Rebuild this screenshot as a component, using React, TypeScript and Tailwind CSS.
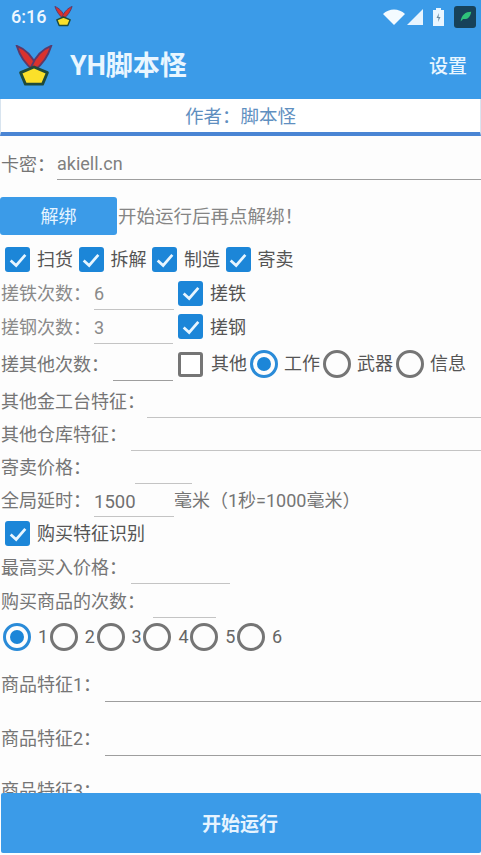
import React, { type FC } from "react";

// full-width punctuation, as the CJK font draws it
const COLON = "\uFF1A";
const BANG = "\uFF01";
const LP = "\uFF08";
const RP = "\uFF09";

const Logo: FC<{ className?: string }> = ({ className }) => (
  <svg viewBox="0 0 40 44" className={className}>
    <path d="M20 27 C12 21 5 11 2 1 C10 4 18 11 23 23 Z" fill="#d9322e" stroke="#5a3a6a" strokeWidth="2" />
    <path d="M20 27 C28 21 35 11 38 1 C30 4 22 11 17 23 Z" fill="#d9322e" stroke="#5a3a6a" strokeWidth="2" />
    <path d="M20 23 L34 29 L29 41 L11 41 L6 29 Z" fill="#fbe02a" stroke="#1f4a3a" strokeWidth="3" strokeLinejoin="round" />
  </svg>
);

const Check: FC<{ on?: boolean }> = ({ on = true }) =>
  on ? (
    <div className="flex h-[25px] w-[25px] shrink-0 items-center justify-center rounded-[3px] bg-[#1c86d8]">
      <svg viewBox="0 0 24 24" className="h-[22px] w-[22px]" fill="none" stroke="#e8f6ff" strokeWidth="3">
        <path d="M4 12.5 L10 18 L20 6.5" />
      </svg>
    </div>
  ) : (
    <div className="h-[25px] w-[25px] shrink-0 rounded-[3px] border-[3px] border-[#757575] bg-white" />
  );

const Radio: FC<{ on?: boolean; className?: string }> = ({ on, className = "" }) =>
  on ? (
    <div className={`flex h-[28px] w-[28px] shrink-0 items-center justify-center rounded-full border-[3px] border-[#2a8bd8] ${className}`}>
      <div className="h-[14px] w-[14px] rounded-full bg-[#1c86d8]" />
    </div>
  ) : (
    <div className={`h-[28px] w-[28px] shrink-0 rounded-full border-[3px] border-[#757575] ${className}`} />
  );

const Field: FC<{ label: string; h: number; inputClass: string }> = ({ label, h, inputClass }) => (
  <div className="flex items-center" style={{ height: h }}>
    <span className="shrink-0 whitespace-nowrap pl-px pt-[2px] text-[#757575]">{label + COLON}</span>
    <span className={`relative top-[2px] h-[30px] border-b border-[#c4c4c4] ${inputClass}`} />
  </div>
);

const cards = ["扫货", "拆解", "制造", "寄卖"];
const others = ["工作", "武器", "信息"];
const nums = ["1", "2", "3", "4", "5", "6"];

export default function App() {
  return (
    <div
      className="flex h-[855px] w-[481px] flex-col overflow-hidden bg-[#fdfdfd] text-[18px] leading-none"
      style={{ fontFamily: '"Roboto", "Noto Sans CJK SC", sans-serif' }}
    >
      <div className="h-[99px] shrink-0 bg-[#3b9be8] text-white">
        <div className="flex h-[33px] items-center pl-[11px] pr-[5px]">
          <span className="text-[18px] font-medium text-[#eef7ff]">6:16</span>
          <Logo className="ml-[7px] h-[21px] w-[21px]" />
          <div className="ml-auto flex items-center">
            <svg viewBox="0 0 22 16" className="h-[16px] w-[22px]">
              <path d="M0 5 C6 -1 16 -1 22 5 L11 16 Z" fill="#f4fbff" />
            </svg>
            <svg viewBox="0 0 16 16" className="ml-[2px] h-[16px] w-[16px]">
              <path d="M16 0 V16 H0 Z" fill="#e8f5ff" />
            </svg>
            <svg viewBox="0 0 11 18" className="ml-[10px] h-[18px] w-[11px]">
              <path d="M3 0 H8 V2 H11 V18 H0 V2 H3 Z" fill="#eaf6ff" />
              <path d="M6 5 L3.5 10 H5.5 L5 14 L7.5 9 H5.5 Z" fill="#6b8aa0" />
            </svg>
            <div className="ml-[10px] flex h-[22px] w-[22px] items-center justify-center rounded-[3px] bg-[#17425a]">
              <svg viewBox="0 0 16 16" className="h-[13px] w-[13px]">
                <path d="M2 14 C3 6 8 2 15 2 C14 9 10 12 5 11 Z" fill="#2fc27a" />
              </svg>
            </div>
          </div>
        </div>
        <div className="flex h-[66px] items-center pl-[14px] pr-[14px]">
          <Logo className="h-[42px] w-[40px]" />
          <span className="ml-[16px] text-[27px] font-bold text-[#e9f6ff]">YH脚本怪</span>
          <span className="ml-auto text-[19px] font-medium text-[#e9f6ff]">设置</span>
        </div>
      </div>

      <div className="flex h-[37px] shrink-0 items-center justify-center border-x border-[#d8e4ef] border-b-[4px] border-b-[#4a85d4] bg-white pt-[4px] text-[18.5px] text-[#5f8fc0]">
        {"作者" + COLON + "脚本怪"}
      </div>

      <div className="min-h-0 flex-1 overflow-hidden">
        <div className="flex h-[44px] items-end">
          <span className="mb-[6px] shrink-0 pl-px text-[#757575]">{"卡密" + COLON}</span>
          <span className="ml-[2px] h-[30px] flex-1 border-b border-[#9e9e9e] text-[#808080] leading-[28px]">akiell.cn</span>
        </div>

        <div className="mt-[17px] flex h-[38px] items-center">
          <button className="h-[38px] w-[117px] rounded-[3px] bg-[#3b9be8] pt-[2px] text-[#e6f4ff]">解绑</button>
          <span className="ml-px pt-[2px] text-[18.5px] text-[#858585]">{"开始运行后再点解绑" + BANG}</span>
        </div>

        <div className="mt-[12px] flex h-[25px] items-center pl-[5px]">
          {cards.map((c) => (
            <div key={c} className="flex w-[73.5px] items-center">
              <Check />
              <span className="ml-[7px] text-[#555]">{c}</span>
            </div>
          ))}
        </div>

        <div className="mt-[4px] flex h-[34px] items-center">
          <span className="w-[94px] shrink-0 whitespace-nowrap pl-px pt-[2px] text-[#8a8a8a]">{"搓铁次数" + COLON}</span>
          <span className="relative top-[1px] h-[32px] w-[80px] border-b border-[#c4c4c4] text-[#8a8a8a] leading-[32px]">6</span>
          <div className="ml-[4px]"><Check /></div>
          <span className="ml-[7px] pt-[2px] text-[#555]">搓铁</span>
        </div>
        <div className="flex h-[33px] items-center">
          <span className="w-[94px] shrink-0 whitespace-nowrap pl-px pt-[2px] text-[#8a8a8a]">{"搓钢次数" + COLON}</span>
          <span className="relative top-[1px] h-[32px] w-[79px] border-b border-[#c4c4c4] text-[#8a8a8a] leading-[32px]">3</span>
          <div className="ml-[5px]"><Check /></div>
          <span className="ml-[7px] pt-[2px] text-[#555]">搓钢</span>
        </div>
        <div className="flex h-[41px] items-center pt-[1px]">
          <span className="w-[113px] shrink-0 whitespace-nowrap pl-px pt-[2px] text-[#757575]">{"搓其他次数" + COLON}</span>
          <span className="relative top-[1px] h-[32px] w-[60px] border-b border-[#9e9e9e]" />
          <div className="ml-[5px]"><Check on={false} /></div>
          <span className="ml-[8px] text-[#555]">其他</span>
          {others.map((o, i) => (
            <div key={o} className="flex items-center">
              <Radio on={i === 0} className="ml-[3px]" />
              <span className="ml-[6px] text-[#555]">{o}</span>
            </div>
          ))}
        </div>

        <Field label="其他金工台特征" h={33} inputClass="ml-[2px] flex-1" />
        <Field label="其他仓库特征" h={33} inputClass="ml-[4px] flex-1" />
        <Field label="寄卖价格" h={33} inputClass="ml-[44px] w-[57px]" />

        <div className="flex h-[34px] items-center">
          <span className="w-[94px] shrink-0 whitespace-nowrap pl-px pt-[2px] text-[#757575]">{"全局延时" + COLON}</span>
          <span className="relative top-[1px] h-[31px] w-[80px] border-b border-[#c4c4c4] text-[18.5px] text-[#707070] leading-[32px]">1500</span>
          <span className="whitespace-nowrap pt-[2px] text-[#757575]">{"毫米" + LP + "1秒=1000毫米" + RP}</span>
        </div>

        <div className="flex h-[33px] items-center pl-[5px]">
          <Check />
          <span className="ml-[7px] text-[#555]">购买特征识别</span>
        </div>

        <Field label="最高买入价格" h={34} inputClass="ml-[4px] w-[99px]" />
        <Field label="购买商品的次数" h={33} inputClass="ml-[8px] w-[63px]" />

        <div className="mt-[6px] flex h-[28px] items-center pl-[3px]">
          {nums.map((n, i) => (
            <div key={n} className="flex w-[46.8px] items-center">
              <Radio on={i === 0} />
              <span className="ml-[7px] text-[#666]">{n}</span>
            </div>
          ))}
        </div>

        <div className="mt-[18px] flex h-[32px] items-center">
          <span className="shrink-0 pl-px text-[#757575]">{"商品特征1" + COLON}</span>
          <span className="relative top-[1px] ml-[4px] h-[32px] flex-1 border-b border-[#9e9e9e]" />
        </div>
        <div className="mt-[22px] flex h-[32px] items-center">
          <span className="shrink-0 pl-px text-[#757575]">{"商品特征2" + COLON}</span>
          <span className="relative top-[1px] ml-[4px] h-[32px] flex-1 border-b border-[#9e9e9e]" />
        </div>
        <div className="mt-[20px] flex h-[32px] items-center">
          <span className="pl-px text-[#757575]">{"商品特征3" + COLON}</span>
        </div>
      </div>

      <button className="mb-[2px] ml-px h-[60px] shrink-0 rounded-[2px] bg-[#3b9be8] pr-[2px] pt-[2px] text-[19px] font-bold text-[#e6f4ff]">
        开始运行
      </button>
    </div>
  );
}
